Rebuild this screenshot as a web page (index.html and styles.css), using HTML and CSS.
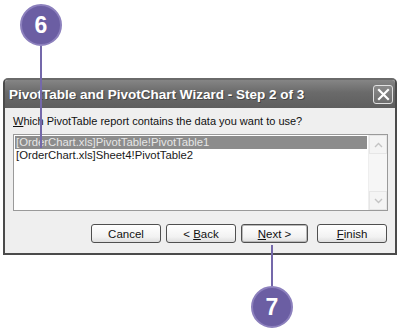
FILE: index.html
```html
<!DOCTYPE html>
<html lang="en">
<head>
    <meta charset="UTF-8">
    <title>PivotTable and PivotChart Wizard</title>
    <link rel="stylesheet" href="styles.css">
</head>
<body>
    <!-- CALLOUT 6 -->
    <div class="callout callout-6">
        <div class="badge">6</div>
        <div class="stem stem-6"></div>
    </div>

    <div class="dialog">
        <div class="titlebar">
            <span class="title">PivotTable and PivotChart Wizard - Step 2 of 3</span>
            <span class="close">
                <svg width="13" height="13" viewBox="0 0 13 13">
                    <path d="M2 2 L11 11 M11 2 L2 11" stroke="#fff" stroke-width="2.2" stroke-linecap="square"/>
                </svg>
            </span>
        </div>
        <div class="content">
            <div class="prompt"><u>W</u>hich PivotTable report contains the data you want to use?</div>
            <div class="listbox">
                <div class="items">
                    <div class="item selected">[OrderChart.xls]PivotTable!PivotTable1</div>
                    <div class="item">[OrderChart.xls]Sheet4!PivotTable2</div>
                </div>
                <div class="scrollbar">
                    <div class="arrow">
                        <svg width="9" height="6" viewBox="0 0 9 6"><path d="M1 5 L4.5 1.5 L8 5" fill="none" stroke="#c4c4c4" stroke-width="1.4"/></svg>
                    </div>
                    <div class="track"></div>
                    <div class="arrow">
                        <svg width="9" height="6" viewBox="0 0 9 6"><path d="M1 1 L4.5 4.5 L8 1" fill="none" stroke="#c4c4c4" stroke-width="1.4"/></svg>
                    </div>
                </div>
            </div>
            <div class="buttons">
                <button class="btn">Cancel</button>
                <button class="btn">&lt; <u>B</u>ack</button>
                <button class="btn btn-default"><u>N</u>ext &gt;</button>
                <button class="btn"><u>F</u>inish</button>
            </div>
        </div>
    </div>

    <!-- CALLOUT 7 -->
    <div class="callout callout-7">
        <div class="stem stem-7"></div>
        <div class="badge">7</div>
    </div>
</body>
</html>
```

FILE: styles.css
```css
body {
    margin: 0;
    padding: 78px 0 0 3px;
    background: #fff;
    font-family: "Liberation Sans", Arial, sans-serif;
    position: relative;
    width: 400px;
    height: 334px;
    box-sizing: border-box;
    overflow: hidden;
}
.dialog {
    width: 394px;
    height: 177px;
    box-sizing: border-box;
    border: 2px solid #4b4b4b;
    border-top-color: #6a6a6a;
    border-radius: 5px 5px 0 0;
    background: #efefef;
    display: flex;
    flex-direction: column;
}
.titlebar {
    height: 28px;
    background: linear-gradient(#858585, #6a6a6a 45%, #5e5e5e);
    display: flex;
    align-items: center;
    justify-content: space-between;
    padding: 0 2px 0 4px;
    border-radius: 3px 3px 0 0;
}
.title {
    color: #fff;
    font-family: "Liberation Sans", Arial, sans-serif;
    font-weight: bold;
    font-size: 13.5px;
    text-shadow: 1px 1px 0 #444;
}
.close {
    width: 20px;
    height: 19px;
    box-sizing: border-box;
    border: 1px solid #e0e0e0;
    border-radius: 3px;
    background: linear-gradient(#8a8a8a, #6e6e6e);
    display: flex;
    align-items: center;
    justify-content: center;
}
.content {
    flex: 1;
    padding: 6px 7px 0 8px;
}
.prompt {
    font-size: 11px;
    color: #111;
    height: 20px;
    line-height: 14px;
}
.listbox {
    height: 77px;
    box-sizing: border-box;
    border: 1px solid #9a9a9a;
    background: #fff;
    display: flex;
}
.items {
    flex: 1;
    padding: 1px 1px;
}
.item {
    font-size: 11.3px;
    line-height: 13px;
    color: #1a1a1a;
    padding-left: 1px;
}
.item.selected {
    background: #8c8c8c;
    color: #e6e6e6;
}
.scrollbar {
    width: 18px;
    display: flex;
    flex-direction: column;
    background: #f6f6f6;
    border-left: 1px solid #eee;
}
.arrow {
    height: 17px;
    display: flex;
    align-items: center;
    justify-content: center;
    background: #f4f4f4;
    border: 1px solid #e6e6e6;
}
.track {
    flex: 1;
}
.buttons {
    display: flex;
    justify-content: flex-end;
    gap: 5px;
    margin-top: 13px;
    padding-right: 1px;
}
.btn {
    width: 70px;
    height: 19px;
    padding: 0;
    border: 1px solid #4f4f4f;
    border-radius: 3px;
    background: linear-gradient(#ffffff, #f2f2f2 70%, #dedede);
    font-family: "Liberation Sans", Arial, sans-serif;
    font-size: 11.5px;
    color: #111;
}
.btn-default {
    width: 67px;
    box-shadow: inset 0 0 0 1px #b9b9b9;
}
.btn + .btn-default + .btn {
    margin-left: 4px;
}

/* CALLOUTS */
.callout {
    position: absolute;
    display: flex;
    flex-direction: column;
    align-items: center;
}
.callout-6 {
    left: 20px;
    top: 4px;
}
.callout-7 {
    left: 251px;
    top: 245px;
}
.badge {
    width: 38px;
    height: 38px;
    border-radius: 50%;
    background: #6b5ea3;
    border: 2px solid #8c80bd;
    color: #fff;
    font-family: "Liberation Sans", Arial, sans-serif;
    font-weight: bold;
    font-size: 23px;
    display: flex;
    align-items: center;
    justify-content: center;
}
.stem {
    width: 2px;
    background: #7468aa;
}
.stem-6 {
    height: 102px;
}
.stem-7 {
    height: 41px;
}
```
